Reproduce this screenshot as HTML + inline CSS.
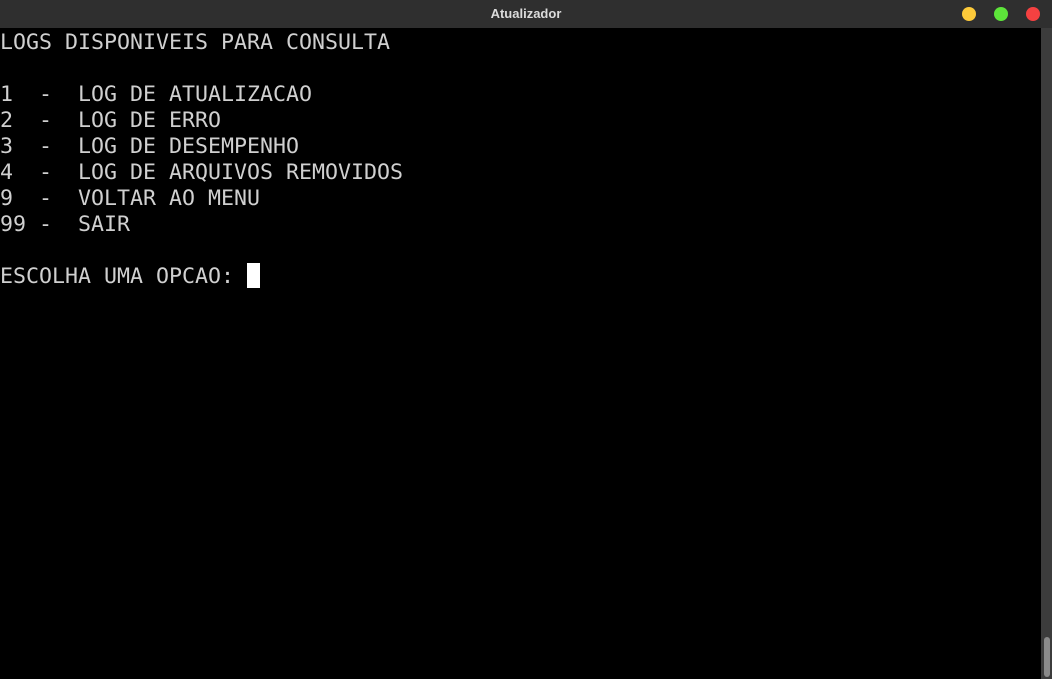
<!DOCTYPE html>
<html><head><style>
body{margin:0;width:1052px;height:679px;background:#000;overflow:hidden;position:relative}
.tb{position:absolute;left:0;top:0;width:1052px;height:28px;background:#2f2f2f;color:#dcdcdc;font:bold 13px "Liberation Sans",sans-serif;text-align:center;line-height:28px}
.c{position:absolute;top:7px;width:14px;height:14px;border-radius:50%}
pre{position:absolute;left:0;top:30px;margin:0;font-family:"DejaVu Sans Mono",monospace;font-size:21.6px;line-height:26px;color:#d0d0d0}
.cur{position:absolute;left:247px;top:263px;width:13px;height:25px;background:#fff}
.sb{position:absolute;left:1041px;top:28px;width:11px;height:651px;background:#3c3c3c}
.th{position:absolute;left:1044px;top:637px;width:6px;height:40px;border-radius:3px;background:#8a8a8a}
</style></head><body>
<div class="tb">Atualizador</div>
<div class="c" style="left:962px;background:#fdca3a"></div>
<div class="c" style="left:994px;background:#5de53a"></div>
<div class="c" style="left:1026px;background:#f54141"></div>
<pre>LOGS DISPONIVEIS PARA CONSULTA

1  -  LOG DE ATUALIZACAO
2  -  LOG DE ERRO
3  -  LOG DE DESEMPENHO
4  -  LOG DE ARQUIVOS REMOVIDOS
9  -  VOLTAR AO MENU
99 -  SAIR

ESCOLHA UMA OPCAO: </pre>
<div class="cur"></div>
<div class="sb"></div><div class="th"></div>
</body></html>
